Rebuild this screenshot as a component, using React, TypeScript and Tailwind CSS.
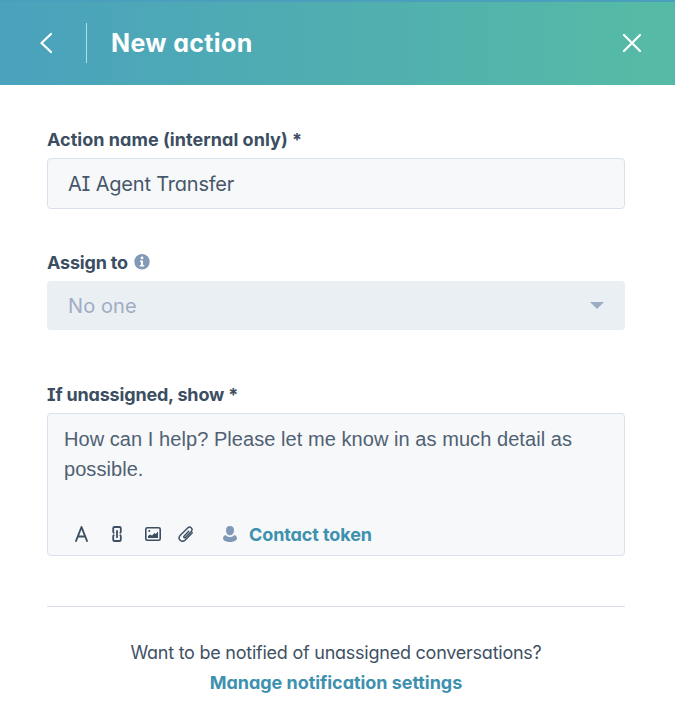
import type { ReactNode } from "react";

const LABEL =
  "flex items-center h-6 text-[18px] font-bold text-[#3b4e62] whitespace-nowrap";

function Toolbar({ children }: { children: ReactNode }) {
  return <div className="mt-auto flex h-6 items-center mb-[9px] pl-[11px] text-[#3b4e62]">{children}</div>;
}

function Header() {
  return (
    <header className="flex h-[85px] items-center border-t-2 border-r-1 border-t-[#4a9fbd] border-r-[#55adb9] bg-linear-to-r from-[#4aa2bd] via-[#50aeb0] to-[#56bba5] pb-[2px] pl-[39px] pr-[32px]">
      <svg className="h-[22px] w-[14px]" viewBox="0 0 14 22" fill="none" stroke="white" strokeWidth="2.3" strokeLinecap="round" strokeLinejoin="round">
        <path d="M12 2 2.5 11 12 20" />
      </svg>
      <div className="ml-[33px] h-10 w-px bg-white/60" />
      <h1 className="ml-[24px] pt-[3px] text-[25px] font-bold tracking-[0.35px] text-white">New action</h1>
      <svg className="ml-auto h-5 w-5" viewBox="0 0 20 20" fill="none" stroke="white" strokeWidth="2.2" strokeLinecap="round">
        <path d="M2 2 18 18M18 2 2 18" />
      </svg>
    </header>
  );
}

export default function App() {
  return (
    <div className="h-[720px] w-[675px] overflow-hidden bg-white text-[#3f5165] font-['Inter','Noto_Sans',sans-serif] [font-feature-settings:'cv11','cv08']">
      <Header />
      <main className="flex flex-col pl-[47px] pr-[50px] pt-[42px]">
        <label className={LABEL}><span className="tracking-[0.04px]">Action name (internal only) *</span></label>
        <div className="mt-[7px] flex h-[51px] items-center rounded-[4px] border border-[#dbe1ec] bg-[#f6f8fa] pl-5 text-[20px] text-[#46576a]">
          <span className="tracking-[-0.2px]">AI Agent Transfer</span>
        </div>

        <label className={LABEL + " mt-[41px]"}>
          <span className="tracking-[-0.2px]">Assign to</span>
          <svg className="ml-[6px] h-4 w-4" viewBox="0 0 16 16">
            <circle cx="8" cy="7.7" r="7.7" fill="#8399b8" />
            <path d="M6 6.5h3v4.6h1.2v1.5H5.8v-1.5H7V7.9H6z" fill="white" />
            <circle cx="8" cy="3.9" r="1.4" fill="white" />
          </svg>
        </label>
        <div className="mt-[7px] flex h-[49px] items-center justify-between rounded-[4px] bg-[#eaeff3] pl-[21px] pr-[21px] text-[20px] text-[#a0adc3]">
          <span className="tracking-[0.1px]">No one</span>
          <svg className="h-[7px] w-[14px]" viewBox="0 0 14 7"><path d="M0 0h14L7 7z" fill="#9dabc4" /></svg>
        </div>

        <label className={LABEL + " mt-[52px]"}><span className="tracking-[-0.18px]">If unassigned, show *</span></label>
        <div className="mt-[7px] flex h-[143px] flex-col rounded-[4px] border border-[#dbe1ec] bg-[#f6f8fa] px-4 pt-[10px]">
          <p className="font-['Liberation_Sans',sans-serif] text-[20px] leading-[30px] tracking-[0.06px] text-[#506173]">
            <span className="block whitespace-nowrap">How can I help? Please let me know in as much detail as</span>
            <span className="block">possible.</span>
          </p>
          <Toolbar>
            <svg className="h-4 w-[13px]" viewBox="0 0 13 16" fill="none" stroke="currentColor" strokeWidth="1.9" strokeLinecap="round" strokeLinejoin="round">
              <path d="M1 15 6.5 1 12 15M3 10.5h7" />
            </svg>
            <svg className="ml-[24px] h-4 w-[10px]" viewBox="0 0 10 16" fill="none" stroke="currentColor" strokeWidth="1.8" strokeLinecap="round">
              <path d="M1.7 6.7Q1.2 6.3 1.2 5.5V2.3Q1.2 1 2.5 1h5q1.3 0 1.3 1.3v3.2q0 .8-.5 1.2M1.700 9.300q-.5.4-.5 1.200v3.200Q1.200 15 2.500 15h5q1.300 0 1.300-1.300v-3.200q0-.8-.5-1.200M5 4.800v6.400" />
            </svg>
            <svg className="ml-[23px] h-[14px] w-4" viewBox="0 0 16 14">
              <rect x=".8" y=".8" width="14.4" height="12.4" rx="1.5" fill="none" stroke="currentColor" strokeWidth="1.6" />
              <path d="M3 11V9l2-1.500 2 1L9.500 6l1.200 1L13 4.500V11z" fill="currentColor" />
              <circle cx="4.300" cy="4" r="1" fill="currentColor" />
            </svg>
            <svg className="ml-[17px] h-4 w-4" viewBox="0 0 16 16" fill="none" stroke="currentColor" strokeWidth="1.4" strokeLinecap="round" strokeLinejoin="round">
              <path d="M10.700 5.300 6 10.200c-.9.9.5 2.200 1.400 1.300l5.800-6c2.300-2.500-.9-5.900-3.500-3.500L2.300 9.200c-3.400 3.700 1.400 8.200 5 4.800l7-7.200" />
            </svg>
            <svg className="ml-[29px] h-4 w-[14px]" viewBox="0 0 14 16" fill="#8298b8">
              <path d="M7 0C4.400 0 3 1.600 3 4.200S4.500 9.300 7 9.300s4-2.500 4-5.100S9.600 0 7 0zM2.800 9C1 9.500 0 10.800 0 12.300 0 14.500 3 16 7 16s7-1.500 7-3.700c0-1.500-1-2.800-2.800-3.300C10.200 10.400 8.700 11 7 11s-3.200-.6-4.200-2z" />
            </svg>
            <span className="ml-[12px] whitespace-nowrap text-[18px] font-bold tracking-[-0.1px] text-[#3d91ae]">Contact token</span>
          </Toolbar>
        </div>

        <div className="mt-[50px] h-px bg-[#d9dfe9]" />
        <footer className="mt-[31px] flex flex-col items-center text-[18px] leading-[30px]">
          <span className="whitespace-nowrap tracking-[-0.24px]">Want to be notified of unassigned conversations?</span>
          <a className="whitespace-nowrap font-bold tracking-[-0.05px] text-[#3d91ae]">Manage notification settings</a>
        </footer>
      </main>
    </div>
  );
}
